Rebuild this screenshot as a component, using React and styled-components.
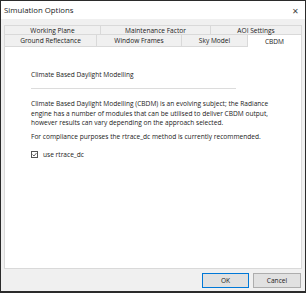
import React from "react";
import styled, { createGlobalStyle } from "styled-components";

const Global = createGlobalStyle`
  html, body { margin: 0; padding: 0; background: #fff; }
  * { box-sizing: border-box; }
`;

const Window = styled.div`
  width: 306px;
  height: 293px;
  display: flex;
  flex-direction: column;
  border: 1px solid #2b2b2b;
  border-bottom-width: 2px;
  background: #f0f0f0;
  font-family: "Open Sans", "Noto Sans", sans-serif;
  color: #1a1a1a;
`;

const TitleBar = styled.div`
  height: 18px;
  flex: none;
  background: #fff;
  display: flex;
  align-items: center;
  justify-content: space-between;
  padding: 0 6px 0 3px;
  font-size: 7.8px;
`;

const Close = styled.span`
  font-size: 8px;
  color: #444;
`;

const Body = styled.div`
  flex: 1;
  display: flex;
  flex-direction: column;
  padding: 6px 3px 0 3px;
`;

const TabRow = styled.div`
  display: flex;
  height: ${(p) => p.h}px;
`;

const Tab = styled.div`
  width: ${(p) => p.w}px;
  display: flex;
  align-items: ${(p) => (p.active ? "flex-start" : "center")};
  justify-content: center;
  font-size: 6.6px;
  background: ${(p) => (p.active ? "#fff" : "#f0f0f0")};
  border: 1px solid #d9d9d9;
  border-left-width: ${(p) => (p.first ? 1 : 0)}px;
  border-bottom: ${(p) => (p.active ? "none" : "1px solid #d9d9d9")};
  border-top-width: ${(p) => (p.top ? 1 : 0)}px;
  padding-top: ${(p) => (p.active ? 2 : 0)}px;
  position: relative;
  z-index: ${(p) => (p.active ? 1 : 0)};
  margin-bottom: ${(p) => (p.active ? -1 : 0)}px;
`;

const Panel = styled.div`
  flex: 1;
  background: #fff;
  border: 1px solid #d9d9d9;
  border-top: none;
  padding: 23px 0 0 26px;
  font-size: 6.6px;
  line-height: 9.4px;
`;

const Heading = styled.div`
  margin-bottom: 9px;
`;

const Rule = styled.div`
  width: 205px;
  height: 1px;
  background: #dcdcdc;
  margin-bottom: 10px;
`;

const Para = styled.p`
  margin: 0 0 4px 0;
  width: 240px;
`;

const CheckRow = styled.label`
  display: flex;
  align-items: center;
  gap: 5px;
  margin-top: 9px;
`;

const Box = styled.span`
  width: 7px;
  height: 7px;
  border: 1px solid #555;
  display: inline-flex;
  align-items: center;
  justify-content: center;
`;

const Footer = styled.div`
  height: 22px;
  flex: none;
  display: flex;
  justify-content: flex-end;
  align-items: center;
  gap: 4px;
  padding-right: 1px;
`;

const Button = styled.div`
  width: ${(p) => p.w}px;
  height: 15px;
  display: flex;
  align-items: center;
  justify-content: center;
  font-size: 6.6px;
  background: #e1e1e1;
  border: 1px solid ${(p) => (p.primary ? "#0078d7" : "#adadad")};
`;

export default function App() {
  return (
    <>
      <Global />
      <Window>
        <TitleBar>
          <span>Simulation Options</span>
          <Close>✕</Close>
        </TitleBar>
        <Body>
          <TabRow h={10}>
            <Tab w={97} first top>Working Plane</Tab>
            <Tab w={110} top>Maintenance Factor</Tab>
            <Tab w={91} top>AOI Settings</Tab>
          </TabRow>
          <TabRow h={12}>
            <Tab w={93} first>Ground Reflectance</Tab>
            <Tab w={85}>Window Frames</Tab>
            <Tab w={66}>Sky Model</Tab>
            <Tab w={54} active>CBDM</Tab>
          </TabRow>
          <Panel>
            <Heading>Climate Based Daylight Modelling</Heading>
            <Rule />
            <Para>
              Climate Based Daylight Modelling (CBDM) is an evolving subject; the Radiance
              engine has a number of modules that can be utilised to deliver CBDM output,
              however results can vary depending on the approach selected.
            </Para>
            <Para>For compliance purposes the rtrace_dc method is currently recommended.</Para>
            <CheckRow>
              <Box>
                <svg width="5" height="5" viewBox="0 0 10 10">
                  <path d="M1 5 L4 8 L9 2" fill="none" stroke="#333" strokeWidth="1.5" />
                </svg>
              </Box>
              use rtrace_dc
            </CheckRow>
          </Panel>
          <Footer>
            <Button w={47} primary>OK</Button>
            <Button w={48}>Cancel</Button>
          </Footer>
        </Body>
      </Window>
    </>
  );
}
